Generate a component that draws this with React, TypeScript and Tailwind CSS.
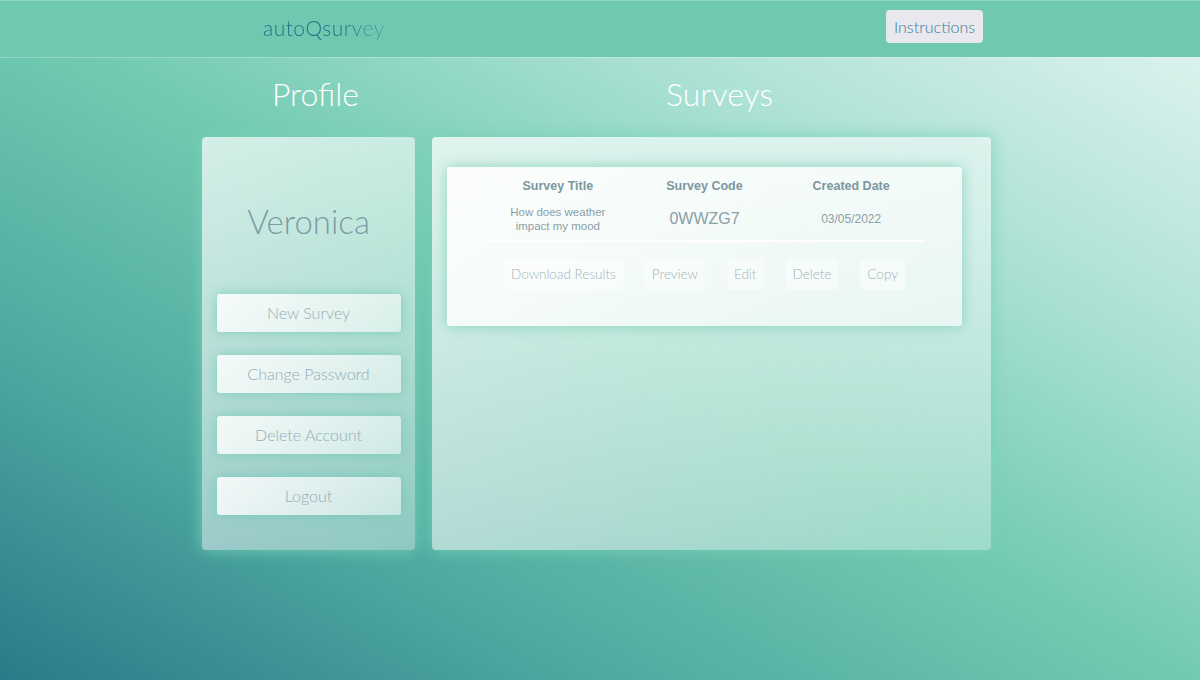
import React from 'react';

const sideActions = ['New Survey', 'Change Password', 'Delete Account', 'Logout'];
const rowActions = ['Download Results', 'Preview', 'Edit', 'Delete', 'Copy'];

const App: React.FC = () => {
  return (
    <div className="relative w-full h-[680px] overflow-hidden bg-[linear-gradient(to_top_right,#2a7b89_0%,#4fa9a0_25%,#72cbb1_50%,#a9e0d3_72%,#e4f5f1_100%)] font-['Lato',sans-serif]">
      <header className="h-[57px] bg-[#6fc8b0] border-t border-[#8fd6c2] shadow-[0_1px_0_rgba(255,255,255,0.25)]">
        <div className="flex items-start justify-between h-full pl-[263px] pr-[217px]">
          <span className="mt-[14px] text-[21px] leading-[26px] tracking-[0.5px] font-light bg-[linear-gradient(to_right,#1f6f84_60%,#5aa3ad)] bg-clip-text text-transparent">
            autoQsurvey
          </span>
          <button className="mt-[9px] h-[33px] px-[8px] rounded bg-[#e8e8ee] text-[#3a7a94] text-[16px] font-light">
            Instructions
          </button>
        </div>
      </header>

      <div className="ml-[202px] w-[789px]">
        <div className="flex h-[80px] items-center -mt-[3px] mb-[3px]">
          <h2 className="w-[213px] pl-[14px] text-center text-white text-[32px] font-light">Profile</h2>
          <h2 className="ml-[17px] w-[559px] pl-[16px] text-center text-white text-[32px] font-light">Surveys</h2>
        </div>

        <div className="flex gap-[17px]">
          <aside className="w-[213px] h-[413px] rounded bg-[linear-gradient(135deg,rgba(255,255,255,0.7),rgba(255,255,255,0.35))] shadow-[0_0_16px_rgba(120,210,185,0.95)] flex flex-col items-center">
            <div className="h-[157px] flex items-center justify-center">
              <span className="text-[33px] font-light text-[#7a9ca6] mt-[12px]">Veronica</span>
            </div>
            <div className="flex flex-col gap-[23px]">
              {sideActions.map((label) => (
                <button
                  key={label}
                  className="w-[184px] h-[38px] rounded-[3px] bg-[linear-gradient(135deg,rgba(255,255,255,0.85),rgba(255,255,255,0.5))] shadow-[0_0_12px_rgba(110,200,175,0.8)] text-[16px] font-light text-[#93adb4]"
                >
                  {label}
                </button>
              ))}
            </div>
          </aside>

          <main className="w-[559px] h-[413px] rounded bg-[linear-gradient(135deg,rgba(255,255,255,0.75),rgba(255,255,255,0.3))] shadow-[0_0_16px_rgba(120,210,185,0.95)] pt-[30px] pl-[15px]">
            <div className="w-[515px] h-[159px] rounded-[3px] bg-[linear-gradient(135deg,rgba(255,255,255,0.9),rgba(255,255,255,0.6))] shadow-[0_0_14px_rgba(120,205,180,0.8)] pt-[10px] font-['Liberation_Sans',Arial,sans-serif]">
              <div className="mx-auto w-[440px]">
                <div className="grid grid-cols-3 text-center text-[12.5px] font-bold text-[#7d979e] h-[17px] items-center">
                  <span>Survey Title</span>
                  <span>Survey Code</span>
                  <span>Created Date</span>
                </div>
                <div className="grid grid-cols-3 text-center items-center h-[48px] pt-[3px] border-b-2 border-white/90 text-[#8aa0a6]">
                  <span className="text-[11.5px] leading-[14px] px-[20px]">How does weather impact my mood</span>
                  <span className="text-[16px]">0WWZG7</span>
                  <span className="text-[12px]">03/05/2022</span>
                </div>
              </div>
              <div className="flex justify-center gap-[22px] mt-[17px] font-['Lato',sans-serif]">
                {rowActions.map((label) => (
                  <button
                    key={label}
                    className="h-[31px] px-[7px] rounded-[3px] bg-white/45 text-[13.5px] font-light text-[#9fb4b9]"
                  >
                    {label}
                  </button>
                ))}
              </div>
            </div>
          </main>
        </div>
      </div>
    </div>
  );
};

export default App;
